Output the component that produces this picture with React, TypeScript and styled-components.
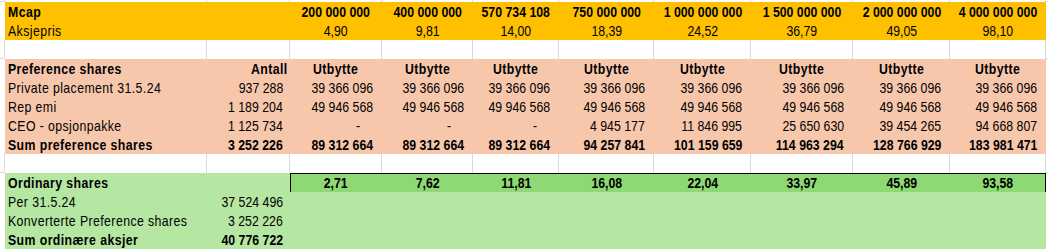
import styled, { createGlobalStyle } from "styled-components";

const GlobalStyle = createGlobalStyle`
    html, body {
        margin: 0;
        padding: 0;
        background: #ffffff;
    }
    body {
        font-family: "Liberation Sans", Arial, sans-serif;
        font-size: 15px;
        color: #000000;
    }
`;

// gutter | label | antall | 8 value columns | gutter
const COLUMNS = "5px 202px 83px 92px 91px 86px 95px 97px 102px 97px 96px 2px";
const VALUE_COLUMNS = "92px 91px 86px 95px 97px 102px 97px 96px";

const GRID = "#dadada";

const fills = {
    white: "#ffffff",
    yellow: "#ffc000",
    pink: "#f7c7ac",
    green: "#b5e6a2",
    none: "transparent",
};

type Fill = keyof typeof fills;
type Align = "left" | "right" | "center";

const Sheet = styled.div`
    width: 1048px;
    display: flex;
    flex-direction: column;
`;

const Row = styled.div<{ $height?: number }>`
    display: grid;
    grid-template-columns: ${COLUMNS};
    height: ${(p) => p.$height ?? 19}px;
    line-height: 20px;
`;

const Gutter = styled.div<{ $lines?: boolean }>`
    box-sizing: border-box;
    background: #ffffff;
    border-bottom: 1px solid ${GRID};
    border-right: ${(p) => (p.$lines ? `1px solid ${GRID}` : "none")};
`;

const CellBox = styled.div<{ $fill: Fill; $align: Align; $bold?: boolean; $pad?: number; $lines?: boolean }>`
    box-sizing: border-box;
    background: ${(p) => fills[p.$fill]};
    text-align: ${(p) => p.$align};
    font-weight: ${(p) => (p.$bold ? 700 : 400)};
    padding-left: ${(p) => (p.$align === "left" ? 3 : 0)}px;
    padding-right: ${(p) => (p.$align === "right" ? p.$pad ?? 9 : 0)}px;
    white-space: nowrap;
    border-right: ${(p) => (p.$lines ? `1px solid ${GRID}` : "none")};
`;

// the sheet font is a narrow face: squeeze Liberation Sans like Arial Narrow
const Narrow = styled.span<{ $align: Align; $text?: boolean }>`
    display: inline-block;
    transform: scaleX(0.82);
    transform-origin: ${(p) => p.$align} center;
    letter-spacing: ${(p) => (p.$text ? "0.5px" : "0")};
`;

type CellProps = {
    fill: Fill;
    align?: Align;
    bold?: boolean;
    pad?: number;
    lines?: boolean;
    text?: boolean;
    children?: React.ReactNode;
};

function Cell({ fill, align = "left", bold, pad, lines, text, children }: CellProps) {
    return <CellBox $fill={fill} $align={align} $bold={bold} $pad={pad} $lines={lines}>
        {children ? <Narrow $align={align} $text={text}>{children}</Narrow> : null}
    </CellBox>
}

const Box = styled.div`
    grid-column: 4 / 12;
    display: grid;
    grid-template-columns: ${VALUE_COLUMNS};
    background: #8ed973;
    box-shadow: inset 0 0 0 1px #000000;
`;

const mcap = ["200 000 000", "400 000 000", "570 734 108", "750 000 000", "1 000 000 000", "1 500 000 000", "2 000 000 000", "4 000 000 000"];
const kurs = ["4,90", "9,81", "14,00", "18,39", "24,52", "36,79", "49,05", "98,10"];

const preference = [
    { label: "Private placement 31.5.24", antall: "937 288", values: Array(8).fill("39 366 096") },
    { label: "Rep emi", antall: "1 189 204", values: Array(8).fill("49 946 568") },
    { label: "CEO - opsjonpakke", antall: "1 125 734", values: ["-", "-", "-", "4 945 177", "11 846 995", "25 650 630", "39 454 265", "94 668 807"] },
];
const sumPreference = ["89 312 664", "89 312 664", "89 312 664", "94 257 841", "101 159 659", "114 963 294", "128 766 929", "183 981 471"];

const perShare = ["2,71", "7,62", "11,81", "16,08", "22,04", "33,97", "45,89", "93,58"];

const ordinary = [
    { label: "Per 31.5.24", antall: "37 524 496", bold: false },
    { label: "Konverterte Preference shares", antall: "3 252 226", bold: false },
    { label: "Sum ordinære aksjer", antall: "40 776 722", bold: true },
];

function BlankRow({ height }: { height?: number }) {
    return <Row $height={height}>
        <Gutter $lines />
        {Array.from({ length: 10 }).map((_, i) => <Cell key={i} fill="white" lines />)}
        <Gutter />
    </Row>
}

export default function App() {
    return <>
        <GlobalStyle />
        <Sheet>
            <BlankRow height={2} />

            {/* Mcap */}
            <Row>
                <Gutter />
                <Cell fill="yellow" bold text>Mcap</Cell>
                <Cell fill="yellow" />
                {mcap.map((v) => <Cell key={v} fill="yellow" align="center" bold>{v}</Cell>)}
                <Gutter />
            </Row>
            <Row>
                <Gutter />
                <Cell fill="yellow" text>Aksjepris</Cell>
                <Cell fill="yellow" />
                {kurs.map((v) => <Cell key={v} fill="yellow" align="center">{v}</Cell>)}
                <Gutter />
            </Row>

            <BlankRow />

            {/* Preference shares */}
            <Row>
                <Gutter />
                <Cell fill="pink" bold text>Preference shares</Cell>
                <Cell fill="pink" bold text align="right" pad={2}>Antall</Cell>
                {mcap.map((v) => <Cell key={v} fill="pink" bold text align="center">Utbytte</Cell>)}
                <Gutter />
            </Row>
            {preference.map((row) => (
                <Row key={row.label}>
                    <Gutter />
                    <Cell fill="pink" text>{row.label}</Cell>
                    <Cell fill="pink" align="right" pad={7}>{row.antall}</Cell>
                    {row.values.map((v, i) => (
                        <Cell key={i} fill="pink" align="right" pad={v === "-" ? 22 : 9}>{v}</Cell>
                    ))}
                    <Gutter />
                </Row>
            ))}
            <Row>
                <Gutter />
                <Cell fill="pink" bold text>Sum preference shares</Cell>
                <Cell fill="pink" bold align="right" pad={7}>3 252 226</Cell>
                {sumPreference.map((v) => <Cell key={v} fill="pink" bold align="right">{v}</Cell>)}
                <Gutter />
            </Row>

            <BlankRow />

            {/* Ordinary shares */}
            <Row>
                <Gutter />
                <Cell fill="green" bold text>Ordinary shares</Cell>
                <Cell fill="green" />
                <Box>
                    {perShare.map((v) => <Cell key={v} fill="none" bold align="center">{v}</Cell>)}
                </Box>
                <Gutter />
            </Row>
            {ordinary.map((row) => (
                <Row key={row.label}>
                    <Gutter />
                    <Cell fill="green" bold={row.bold} text>{row.label}</Cell>
                    <Cell fill="green" bold={row.bold} align="right" pad={7}>{row.antall}</Cell>
                    {mcap.map((v) => <Cell key={v} fill="green" />)}
                    <Gutter />
                </Row>
            ))}
        </Sheet>
    </>
}
